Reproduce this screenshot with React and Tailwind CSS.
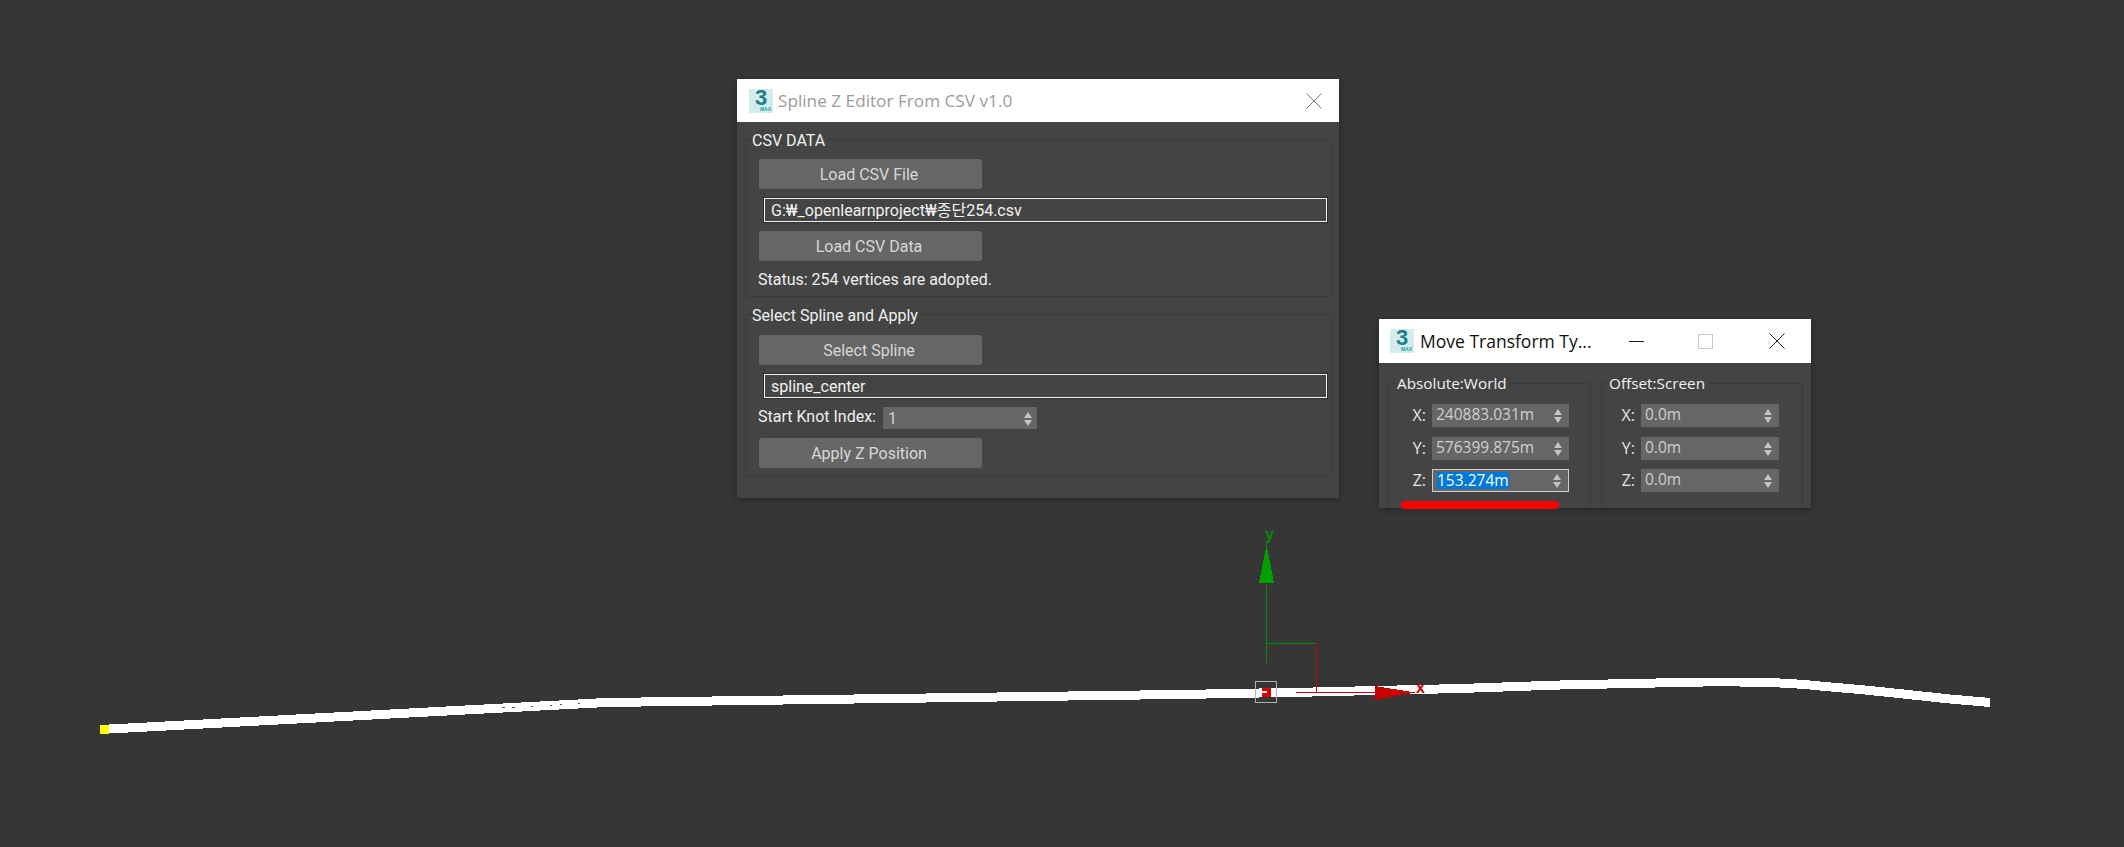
import React from 'react';

const uiFont = "font-['Roboto','Noto_Sans_CJK_KR',sans-serif]";
const titleFont = "font-['Open_Sans',sans-serif]";

// spline centre line, picked off the screenshot
const splinePoints = '100,729.5 606,702.5 1190,694.3 1313,692 1460,688.5 1560,685 1680,682.5 1704,682 1740,682 1770,682.5 1790,683.5 1810,685 1825,686.5 1860,689.5 1894,693 1950,699 1990,702.5';

const AppIcon = () => (
  <div className="flex h-6 w-6 shrink-0 flex-col items-center justify-center bg-[#d5ecec]">
    <span className="-mt-[1px] h-[17px] font-['Liberation_Sans',sans-serif] text-[22px] leading-[17px] font-bold text-[#17818a]">3</span>
    <span className="mt-[1px] self-end pr-[2px] font-['Liberation_Sans',sans-serif] text-[5px] leading-[5px] font-bold text-[#17a5a8]">MAX</span>
  </div>
);

const SpinArrows = () => (
  <svg width="8" height="14" viewBox="0 0 8 14">
    <path d="M4 0 L8 6 L0 6 Z M0 8 L8 8 L4 14 Z" fill="#c4c4c4" />
  </svg>
);

const CloseIcon = ({ stroke = '#222' }) => (
  <svg width="16" height="16" viewBox="0 0 16 16">
    <path d="M0.5 0.5 L15.5 15.5 M15.5 0.5 L0.5 15.5" stroke={stroke} strokeWidth="1" fill="none" />
  </svg>
);

const GroupBox = ({ label, className = '', labelClass = '', children }) => (
  <div className={`relative rounded-[3px] border border-[#3a3a3a] ${className}`}>
    <span className={`absolute left-[6px] bg-[#444444] pr-[2px] leading-[20px] text-[#f0f0f0] ${labelClass}`}>{label}</span>
    {children}
  </div>
);

const ToolButton = ({ children }) => (
  <div className="flex h-[30px] w-[223px] items-center justify-center rounded-[3px] bg-[#666666] pt-[2px] pr-[3px] text-[16px] text-[#d8d8d8]">{children}</div>
);

const TextField = ({ children }) => (
  <div className="mr-[4px] ml-[5px] flex h-[24px] items-center border border-[#f2f2f2] pt-[2px] pl-[6px] text-[16px] text-[#f2f2f2] shadow-[0_0_0_1px_#2e2e2e]">{children}</div>
);

const CoordRow = ({ axis, value, labelWidth, fieldWidth, selected, className = '' }) => (
  <div className={`flex h-[23px] items-center ${className}`}>
    <span className={`-mt-[2px] text-right font-['Open_Sans',sans-serif] text-[16px] text-[#e6e6e6] ${labelWidth}`}>{axis}:</span>
    <div className={`ml-[6px] flex h-[23px] items-center justify-between pr-[7px] pl-[4px] font-['Open_Sans',sans-serif] text-[15.5px] ${fieldWidth} ${selected ? 'border border-[#d0d0d0] bg-[#666666]' : 'bg-[#666666]'}`}>
      {selected ? (
        <span className="h-[17px] bg-[#0078d7] leading-[16px] text-white">{value}</span>
      ) : (
        <span className="-mt-[1px] text-[#cfcfcf]">{value}</span>
      )}
      <SpinArrows />
    </div>
  </div>
);

const SplineEditor = () => (
  <section className="absolute top-[79px] left-[737px] h-[419px] w-[602px] bg-[#444444] shadow-[0_1px_6px_rgba(0,0,0,0.35)]">
    <header className="flex h-[43px] items-center bg-white pr-[17px] pl-[12px]">
      <AppIcon />
      <h1 className={`ml-[5px] flex-1 text-[17.2px] font-normal text-[#9b9b9b] ${titleFont}`}>Spline Z Editor From CSV v1.0</h1>
      <CloseIcon stroke="#777" />
    </header>
    <div className="flex flex-col gap-[17px] pt-[17px] pr-[7px] pl-[8px]">
      <GroupBox label="CSV DATA" className="h-[158px] pt-[19px] pl-[13px]" labelClass="-top-[9px] text-[16px]">
        <ToolButton>Load CSV File</ToolButton>
        <div className="mt-[9px]"><TextField>G:₩_openlearnproject₩종단254.csv</TextField></div>
        <div className="mt-[9px]"><ToolButton>Load CSV Data</ToolButton></div>
        <p className="mt-[9px] -ml-[1px] text-[16px] leading-[20px] text-[#f0f0f0]">Status: 254 vertices are adopted.</p>
      </GroupBox>
      <GroupBox label="Select Spline and Apply" className="h-[163px] pt-[20px] pl-[13px]" labelClass="-top-[9px] text-[16px]">
        <ToolButton>Select Spline</ToolButton>
        <div className="mt-[9px]"><TextField>spline_center</TextField></div>
        <div className="mt-[9px] -ml-[1px] flex h-[22px] items-center">
          <span className="-mt-[2px] w-[125px] text-[16px] text-[#f0f0f0]">Start Knot Index:</span>
          <div className="flex h-[22px] w-[154px] items-center justify-between bg-[#666666] pt-[1px] pr-[5px] pl-[5px] text-[16px] text-[#cfcfcf]">
            1
            <SpinArrows />
          </div>
        </div>
        <div className="mt-[9px]"><ToolButton>Apply Z Position</ToolButton></div>
      </GroupBox>
    </div>
  </section>
);

const MoveTransform = () => (
  <section className="absolute top-[319px] left-[1379px] h-[189px] w-[432px] overflow-hidden bg-[#444444] shadow-[0_1px_6px_rgba(0,0,0,0.35)]">
    <header className="flex h-[44px] items-center bg-white pl-[11px]">
      <AppIcon />
      <h2 className={`ml-[6px] w-[209px] text-[17.5px] font-normal text-[#111111] ${titleFont}`}>Move Transform Ty...</h2>
      <span className="h-[1px] w-[15px] bg-[#222222]" />
      <span className="ml-[54px] h-[15px] w-[15px] border border-[#c8c8c8]" />
      <span className="ml-[56px]"><CloseIcon /></span>
    </header>
    <div className="flex gap-[10px] pt-[20px] pl-[9px]">
      <GroupBox label="Absolute:World" className="h-[160px] w-[203px] pt-[20px]" labelClass={`-top-[11px] left-[8px] text-[15.3px] ${titleFont}`}>
        <CoordRow axis="X" value="240883.031m" labelWidth="w-[37px]" fieldWidth="w-[137px]" />
        <CoordRow axis="Y" value="576399.875m" labelWidth="w-[37px]" fieldWidth="w-[137px]" className="mt-[10px]" />
        <CoordRow axis="Z" value="153.274m" labelWidth="w-[37px]" fieldWidth="w-[137px]" className="mt-[9px]" selected />
      </GroupBox>
      <GroupBox label="Offset:Screen" className="h-[160px] w-[202px] pt-[20px]" labelClass={`-top-[11px] left-[7px] text-[15.3px] ${titleFont}`}>
        <CoordRow axis="X" value="0.0m" labelWidth="w-[33px]" fieldWidth="w-[138px]" />
        <CoordRow axis="Y" value="0.0m" labelWidth="w-[33px]" fieldWidth="w-[138px]" className="mt-[10px]" />
        <CoordRow axis="Z" value="0.0m" labelWidth="w-[33px]" fieldWidth="w-[138px]" className="mt-[9px]" />
      </GroupBox>
    </div>
  </section>
);

// viewport drawing: spline, selection box and the move gizmo
const Viewport = () => (
  <svg className="absolute inset-0" width="2124" height="847" viewBox="0 0 2124 847" shapeRendering="crispEdges">
    <polyline points={splinePoints} fill="none" stroke="#ffffff" strokeWidth="9" />
    <rect x="100" y="725" width="9" height="9" fill="#ffff00" />
    <path d="M502 707.5h3 M512 707.5h3 M531 706.5h2 M550 705.5h2 M560 704.5h2 M578 703.5h2" stroke="#555" strokeWidth="1" />

    <path d="M1266.5 585V663 M1266 643.5H1316" stroke="#008f00" strokeWidth="1" />
    <path d="M1266.5 545 L1274 583 L1259 583 Z" fill="#00a000" />
    <path d="M1266.5 543V550" stroke="#00a000" strokeWidth="1" />
    <text x="1265" y="540" fill="#008f00" fontSize="16" fontFamily="Liberation Sans, sans-serif" fontWeight="700" shapeRendering="auto">y</text>

    <path d="M1316.5 643V692 M1296 692.5H1415" stroke="#c80000" strokeWidth="1" />
    <path d="M1375 686 L1415 692.5 L1375 700 Z" fill="#c80000" />
    <text x="1416" y="693" fill="#c80000" fontSize="16" fontFamily="Liberation Sans, sans-serif" fontWeight="700" shapeRendering="auto">x</text>

    <rect x="1255.5" y="681.5" width="21" height="21" fill="none" stroke="#b0b0b0" strokeWidth="1" />
    <rect x="1262" y="688" width="9" height="9" fill="#d80000" />
    <rect x="1262" y="691" width="5" height="2" fill="#ffffff" />
  </svg>
);

export default function App() {
  return (
    <div className={`relative h-[847px] w-full overflow-hidden bg-[#363636] ${uiFont}`}>
      <Viewport />
      <SplineEditor />
      <MoveTransform />
      <div className="absolute top-[501px] left-[1401px] h-[8px] w-[158px] rounded-full bg-[#ff0000]" />
    </div>
  );
}
